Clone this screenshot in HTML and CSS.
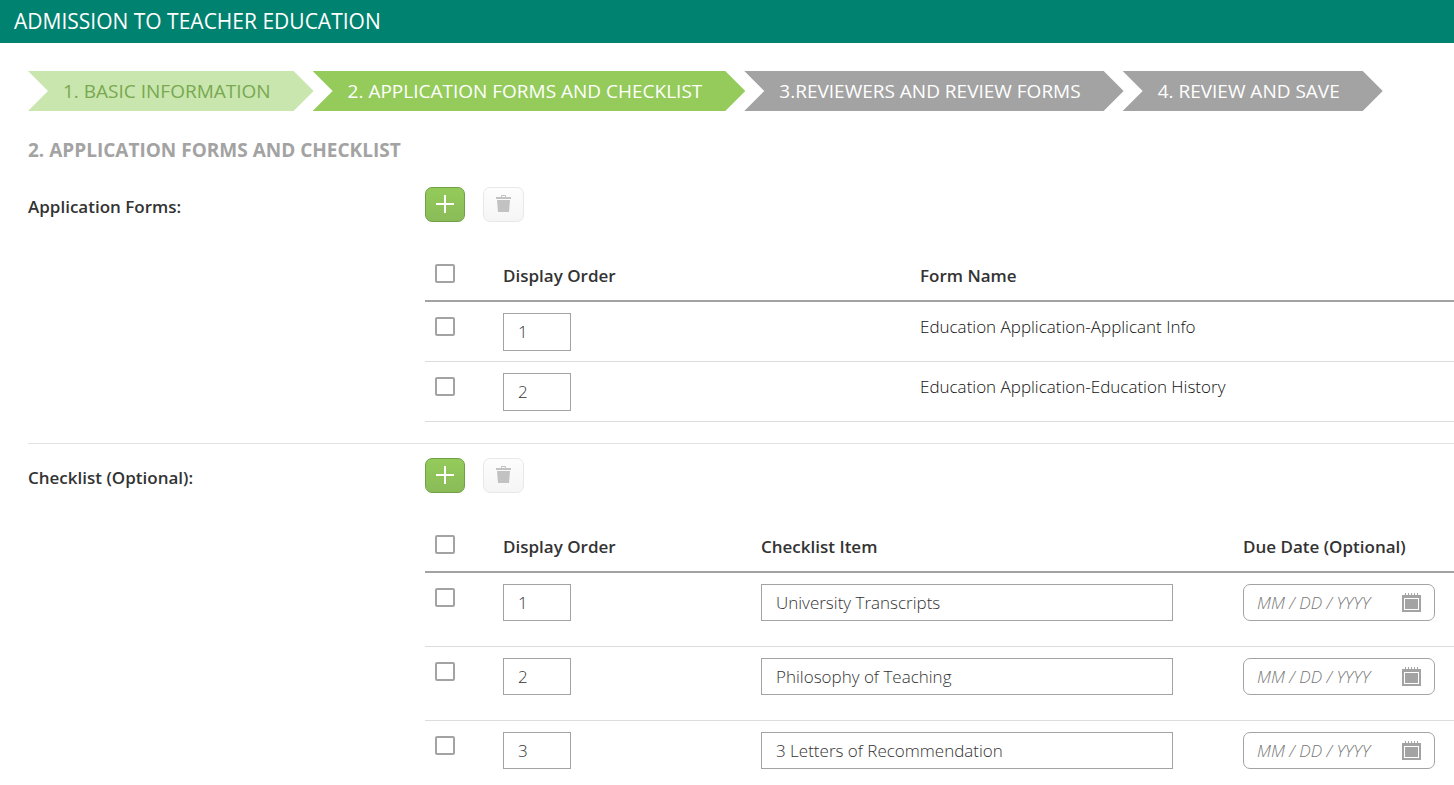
FILE: index.html
```html
<!DOCTYPE html>
<html lang="en">
<head>
<meta charset="utf-8">
<meta name="viewport" content="width=device-width, initial-scale=1">
<title>Admission to Teacher Education</title>
<link rel="stylesheet" href="styles.css">
</head>
<body>
<svg class="sprite" aria-hidden="true">
  <symbol id="icon-plus" viewBox="0 0 18 18"><path d="M8 0h2v8h8v2h-8v8H8v-8H0V8h8z" fill="currentColor"/></symbol>
  <symbol id="icon-trash" viewBox="0 0 16 18"><path fill-rule="evenodd" d="M5 2V1q0-1 1-1h3q1 0 1 1v1h5v2H0V2zM6 2h3V1H6zM1 5h13l-1 12H2z" fill="currentColor"/></symbol>
  <symbol id="icon-calendar" viewBox="0 0 19 19"><path fill-rule="evenodd" d="M0 2h3V0h1v2h2V0h1v2h2V0h1v2h2V0h1v2h2V0h1v2h3v17H0zM2 5v12h15V5z" fill="currentColor"/><path d="M3 6h13v10H3z" fill="currentColor"/></symbol>
</svg>
<header class="titlebar"><h1 class="titlebar-text">ADMISSION TO TEACHER EDUCATION</h1></header>
<main class="page">
  <ol class="steps">
    <li class="step step-done">1. BASIC INFORMATION</li>
    <li class="step step-current" aria-current="step">2. APPLICATION FORMS AND CHECKLIST</li>
    <li class="step">3.REVIEWERS AND REVIEW FORMS</li>
    <li class="step">4. REVIEW AND SAVE</li>
  </ol>
  <h2 class="page-heading">2. APPLICATION FORMS AND CHECKLIST</h2>

  <section class="section" aria-labelledby="forms-label">
    <h3 class="section-label" id="forms-label">Application Forms:</h3>
    <div class="section-body">
      <div class="toolbar">
        <button class="btn btn-add" type="button" aria-label="Add form"><svg class="icon-plus"><use href="#icon-plus"/></svg></button>
        <button class="btn btn-delete" type="button" aria-label="Delete forms" disabled><svg class="icon-trash"><use href="#icon-trash"/></svg></button>
      </div>
      <table class="grid">
        <colgroup><col class="col-check"><col class="col-order-wide"><col></colgroup>
        <thead><tr>
          <th scope="col"><input class="check" type="checkbox" aria-label="Select all forms"></th>
          <th scope="col">Display Order</th><th scope="col">Form Name</th>
        </tr></thead>
        <tbody>
          <tr><td><input class="check" type="checkbox" aria-label="Select form 1"></td>
            <td><input class="field field-order" type="text" value="1" aria-label="Display order, form 1"></td>
            <td>Education Application-Applicant Info</td></tr>
          <tr><td><input class="check" type="checkbox" aria-label="Select form 2"></td>
            <td><input class="field field-order" type="text" value="2" aria-label="Display order, form 2"></td>
            <td>Education Application-Education History</td></tr>
        </tbody>
      </table>
    </div>
  </section>

  <section class="section" aria-labelledby="checklist-label">
    <h3 class="section-label" id="checklist-label">Checklist (Optional):</h3>
    <div class="section-body">
      <div class="toolbar">
        <button class="btn btn-add" type="button" aria-label="Add checklist item"><svg class="icon-plus"><use href="#icon-plus"/></svg></button>
        <button class="btn btn-delete" type="button" aria-label="Delete checklist items" disabled><svg class="icon-trash"><use href="#icon-trash"/></svg></button>
      </div>
      <table class="grid grid-tall">
        <colgroup><col class="col-check"><col class="col-order"><col class="col-item"><col></colgroup>
        <thead><tr>
          <th scope="col"><input class="check" type="checkbox" aria-label="Select all items"></th>
          <th scope="col">Display Order</th><th scope="col">Checklist Item</th><th scope="col">Due Date (Optional)</th>
        </tr></thead>
        <tbody>
          <tr><td><input class="check" type="checkbox" aria-label="Select item 1"></td>
            <td><input class="field field-order" type="text" value="1" aria-label="Display order, item 1"></td>
            <td><input class="field field-item" type="text" value="University Transcripts" aria-label="Checklist item 1"></td>
            <td><div class="date"><input class="date-input" type="text" placeholder="MM / DD / YYYY" aria-label="Due date, item 1"><button class="date-button" type="button" aria-label="Open calendar"><svg class="icon-calendar"><use href="#icon-calendar"/></svg></button></div></td></tr>
          <tr><td><input class="check" type="checkbox" aria-label="Select item 2"></td>
            <td><input class="field field-order" type="text" value="2" aria-label="Display order, item 2"></td>
            <td><input class="field field-item" type="text" value="Philosophy of Teaching" aria-label="Checklist item 2"></td>
            <td><div class="date"><input class="date-input" type="text" placeholder="MM / DD / YYYY" aria-label="Due date, item 2"><button class="date-button" type="button" aria-label="Open calendar"><svg class="icon-calendar"><use href="#icon-calendar"/></svg></button></div></td></tr>
          <tr><td><input class="check" type="checkbox" aria-label="Select item 3"></td>
            <td><input class="field field-order" type="text" value="3" aria-label="Display order, item 3"></td>
            <td><input class="field field-item" type="text" value="3 Letters of Recommendation" aria-label="Checklist item 3"></td>
            <td><div class="date"><input class="date-input" type="text" placeholder="MM / DD / YYYY" aria-label="Due date, item 3"><button class="date-button" type="button" aria-label="Open calendar"><svg class="icon-calendar"><use href="#icon-calendar"/></svg></button></div></td></tr>
        </tbody>
      </table>
    </div>
  </section>
</main>
</body>
</html>
```
FILE: styles.css
```css
* { box-sizing: border-box; }
body {
  margin: 0;
  background: #fff;
  color: #111;
  font-family: "Open Sans", "Noto Sans", sans-serif;
  font-size: 17px;
  font-weight: 300;
  line-height: 28px;
}
h1, h2, h3 { margin: 0; }
input, button { font: inherit; }
.sprite { display: none; }

.titlebar { background: #008270; padding: 0 14px; }
.titlebar-text { color: #fff; font-size: 21px; font-weight: 400; line-height: 43px; }

.page { padding: 28px 0 0 28px; }

.steps { display: flex; margin: 0; padding: 0; list-style: none; }
.step {
  padding: 1px 43px 0 35px;
  background: #a3a3a3;
  color: #fff;
  font-size: 19px;
  font-weight: 400;
  line-height: 39px;
  white-space: nowrap;
  clip-path: polygon(0 0, calc(100% - 20px) 0, 100% 50%, calc(100% - 20px) 100%, 0 100%, 20px 50%);
}
.step + .step { margin-left: -1px; }
.step-done { background: #c9e6ae; color: #78a850; }
.step-current { background: #94cb5a; }

.page-heading { margin-top: 25px; color: #a3a3a3; font-size: 19px; font-weight: 700; line-height: 28px; }

.section { display: grid; grid-template-columns: 397px 1fr; padding: 14px 0 21px; }
.page-heading + .section { padding-top: 23px; }
.section + .section { border-top: 1px solid #e3e3e3; }
.section-label { padding-top: 6px; color: #333; font-size: 17px; font-weight: 600; }

.toolbar { display: flex; gap: 18px; margin-bottom: 30px; }
.btn {
  display: flex;
  justify-content: center;
  align-items: center;
  width: 40px;
  height: 35px;
  padding: 0 0 2px;
  border: 1px solid #6fa045;
  border-radius: 7px;
}
.btn-add { background: linear-gradient(#94cb5a, #8abb58); color: #fff; }
.btn-delete { width: 41px; border-color: #e8e8e8; background: linear-gradient(#fdfdfd, #f5f5f5); color: #c2c2c2; }
.icon-plus { width: 18px; height: 18px; }
.icon-trash { width: 16px; height: 18px; }

.grid { width: 100%; border-collapse: separate; border-spacing: 0; table-layout: fixed; }
.col-check { width: 78px; }
.col-order { width: 258px; }
.col-order-wide { width: 417px; }
.col-item { width: 482px; }
.grid th { height: 50px; padding: 0; border-bottom: 2px solid #a3a3a3; color: #333; font-weight: 600; text-align: left; }
.grid td { padding: 11px 0 10px; border-bottom: 1px solid #dcdcdc; vertical-align: top; }
.grid-tall td { padding-bottom: 25px; }

.check {
  appearance: none;
  display: block;
  width: 20px;
  height: 19px;
  margin: 4px 0 4px 10px;
  border: 2px solid #a3a3a3;
  border-radius: 2px;
  background: #fff;
}
th .check { margin-top: 0; margin-bottom: 6px; }
.field { display: block; height: 38px; padding: 0 14px 1px; border: 1px solid #a3a3a3; border-radius: 0; background: #fff; color: #333; }
.grid-tall .field { height: 37px; padding-bottom: 0; }
.field-order { width: 68px; }
.field-item { width: 412px; }
.date { display: flex; align-items: center; width: 192px; height: 37px; padding: 0 13px; border: 1px solid #a3a3a3; border-radius: 7px; }
.date-input { flex: 1; min-width: 0; padding: 0; border: 0; background: none; color: #333; }
.date-input::placeholder { color: #777; font-style: italic; opacity: 1; }
.date-button { display: flex; padding: 0; border: 0; background: none; color: #a3a3a3; }
.icon-calendar { width: 19px; height: 19px; }
```
